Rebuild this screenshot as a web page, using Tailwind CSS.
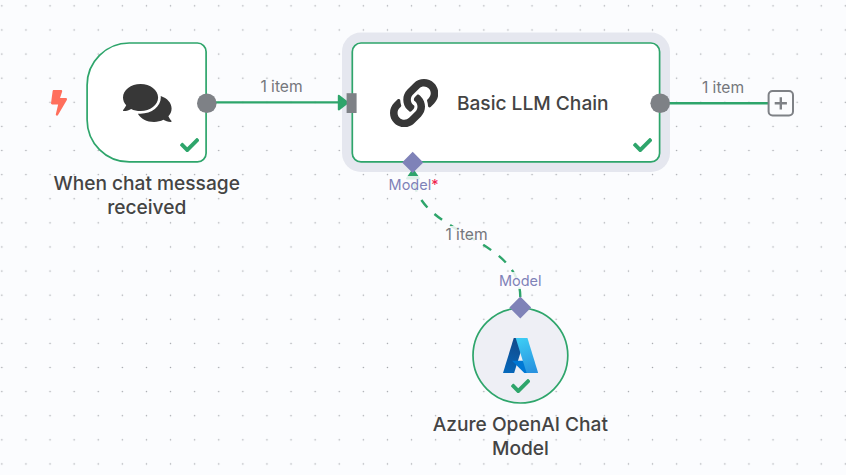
<!DOCTYPE html>
<html lang="en">
<head>
<meta charset="utf-8">
<title>Workflow canvas</title>
<script src="https://cdn.jsdelivr.net/npm/@tailwindcss/browser@4"></script>
</head>
<body class="overflow-hidden font-['Inter',sans-serif]">
<svg class="hidden">
  <symbol id="check" viewBox="0 65 512 382"><path d="M173.898 439.404l-166.4-166.4c-9.997-9.997-9.997-26.206 0-36.204l36.203-36.204c9.997-9.998 26.207-9.998 36.204 0L192 312.69 432.095 72.596c9.997-9.997 26.207-9.997 36.204 0l36.203 36.204c9.997 9.997 9.997 26.206 0 36.204l-294.4 294.401c-9.998 9.997-26.207 9.997-36.204-.001z"/></symbol>
</svg>
<main class="relative h-[475px] w-[846px] overflow-hidden bg-[#fbfcfe]">
  <!-- dotted grid and card outlines -->
  <svg class="absolute inset-0" width="846" height="475">
    <defs><pattern id="dots" x="-10.2" y="-6.2" width="24.1" height="24.11" patternUnits="userSpaceOnUse"><circle cx="12.05" cy="12.05" r="0.75" fill="#a0a2a8"/></pattern></defs>
    <rect width="846" height="475" fill="url(#dots)"/>
    <rect x="342" y="32.6" width="328" height="139.4" rx="19" fill="#e5e7ef"/>
    <g stroke="#2ea56b" stroke-width="1.7">
      <path fill="#fff" d="M129.3 43H197.4A8.7 8.7 0 0 1 206.1 51.7V153.2A8.7 8.7 0 0 1 197.4 161.9H129.3A42.2 42.2 0 0 1 87.1 119.7V85.2A42.2 42.2 0 0 1 129.3 43Z"/>
      <rect x="352.3" y="43" width="307.3" height="118.9" rx="8.7" fill="#fff"/>
      <circle cx="520.4" cy="355.6" r="47.4" fill="#eeeff5"/>
    </g>
  </svg>

  <!-- node cards -->
  <section class="absolute left-[87px] top-[42px] flex h-[121px] w-[120px] items-center justify-center">
    <svg class="ml-[1px] mt-[1px] h-[38px] w-[48.6px] fill-[#373737]" viewBox="0 32 576 448"><path d="M416 192c0-88.4-93.1-160-208-160S0 103.6 0 192c0 34.3 14.1 65.9 38 92-13.4 30.2-35.5 54.2-35.8 54.5-2.2 2.3-2.8 5.7-1.5 8.7S4.8 352 8 352c36.6 0 66.9-12.3 88.7-25 32.2 15.7 70.3 25 111.3 25 114.9 0 208-71.6 208-160zm122 220c23.9-26 38-57.7 38-92 0-66.9-53.5-124.2-129.3-148.1.9 6.6 1.3 13.3 1.3 20.1 0 105.9-107.7 192-240 192-10.8 0-21.3-.8-31.7-1.9C207.8 439.6 281.8 480 368 480c41 0 79.1-9.2 111.3-25 21.8 12.7 52.1 25 88.7 25 3.2 0 6.1-1.9 7.3-4.8 1.3-2.9.7-6.3-1.5-8.7-.3-.3-22.4-24.2-35.8-54.5z"/></svg>
    <svg class="absolute bottom-[11px] right-[8px] h-[14.4px] w-[19.3px] fill-[#2ea56b]"><use href="#check"/></svg>
  </section>

  <section class="absolute left-[352px] top-[42px] flex h-[121px] w-[308px] items-center pl-[38px]">
    <svg class="mt-[1px] h-[48.3px] w-[48.3px] fill-[#373737]" viewBox="0 0 512 512"><path d="M326.612 185.391c59.747 59.809 58.927 155.698.36 214.59-.11.12-.24.25-.36.37l-67.2 67.2c-59.27 59.27-155.699 59.262-214.96 0-59.27-59.26-59.27-155.7 0-214.96l37.106-37.106c9.84-9.84 26.786-3.3 27.294 10.606.648 17.722 3.826 35.527 9.69 52.721 1.986 5.822.567 12.262-3.783 16.612l-13.087 13.087c-28.026 28.026-28.905 73.66-1.155 101.96 28.024 28.579 74.086 28.749 102.325.51l67.2-67.19c28.191-28.191 28.073-73.757 0-101.83-3.701-3.694-7.429-6.564-10.341-8.569a16.037 16.037 0 0 1-6.947-12.606c-.396-10.567 3.348-21.456 11.698-29.806l21.054-21.055c5.521-5.521 14.182-6.199 20.584-1.731a152.482 152.482 0 0 1 20.522 17.197zM467.547 44.449c-59.261-59.262-155.69-59.27-214.96 0l-67.2 67.2c-.12.12-.25.25-.36.37-58.566 58.892-59.387 154.781.36 214.59a152.454 152.454 0 0 0 20.521 17.196c6.402 4.468 15.064 3.789 20.584-1.731l21.054-21.055c8.35-8.35 12.094-19.239 11.698-29.806a16.037 16.037 0 0 0-6.947-12.606c-2.912-2.005-6.64-4.875-10.341-8.569-28.073-28.073-28.191-73.639 0-101.83l67.2-67.19c28.239-28.239 74.3-28.069 102.325.51 27.75 28.3 26.872 73.934-1.155 101.96l-13.087 13.087c-4.35 4.35-5.769 10.79-3.783 16.612 5.864 17.194 9.042 34.999 9.69 52.721.509 13.906 17.454 20.446 27.294 10.606l37.106-37.106c59.271-59.259 59.271-155.699.001-214.959z"/></svg>
    <span class="ml-[18.6px] mt-[2px] whitespace-nowrap text-[19.15px] font-medium text-[#444444]">Basic LLM Chain</span>
    <svg class="absolute bottom-[11px] right-[8px] h-[14.4px] w-[19.3px] fill-[#2ea56b]"><use href="#check"/></svg>
  </section>

  <section class="absolute left-[472px] top-[307px] flex h-[97px] w-[97px] flex-col items-center pt-[31px]">
    <svg class="h-[35px] w-[35.2px]" viewBox="3 6.5 90 83" preserveAspectRatio="none">
      <defs>
        <linearGradient id="a1" gradientUnits="userSpaceOnUse" x1="42" y1="12" x2="15" y2="92"><stop stop-color="#114a8b"/><stop offset="1" stop-color="#0669bc"/></linearGradient>
        <linearGradient id="a2" gradientUnits="userSpaceOnUse" x1="46" y1="10" x2="76" y2="88"><stop stop-color="#3ccbf4"/><stop offset="1" stop-color="#2892df"/></linearGradient>
      </defs>
      <path fill="url(#a1)" d="M30.5 6.5H59.4L31.5 89.5H3Z"/>
      <path fill="#0078d4" d="M26 60.3H71L80 89.5H57.5Z"/>
      <path fill="url(#a2)" d="M35.5 6.5H65.5L93 89.5H63.5Z"/>
    </svg>
    <svg class="mt-[5.8px] h-[14.4px] w-[19.3px] fill-[#2ea56b]"><use href="#check"/></svg>
  </section>

  <!-- trigger bolt -->
  <svg class="absolute left-[51px] top-[90.4px] h-[25.8px] w-[16px] fill-[#ff6f5c]" viewBox="0 0 320 512"><path d="M296 160H180.6l42.6-129.8C227.2 15 215.7 0 200 0H56C44 0 33.8 8.9 32.2 20.8l-32 240C-1.7 275.2 9.5 288 24 288h118.7L96.6 482.5c-3.6 15.2 8 29.5 23.3 29.5 8.4 0 16.4-4.4 20.8-12l176-304c9.3-15.9-2.2-36-20.7-36z"/></svg>

  <!-- connections and ports -->
  <svg class="absolute inset-0" width="846" height="475" fill="none">
    <g stroke="#2ea56b" stroke-width="2.4">
      <path d="M207 102.4H340M660 103.2H768"/>
      <path d="M520.3 297C520.3 235 413 235 413 173" stroke-dasharray="9.6 9.6"/>
    </g>
    <path d="M338.8 95.8L347.5 102.6L338.8 109.4Z" fill="#2ea56b" stroke="#2ea56b" stroke-width="2" stroke-linejoin="round"/>
    <path d="M413 170L419 178.5H407Z" fill="#2ea56b" stroke="#2ea56b" stroke-width="2" stroke-linejoin="round"/>
    <circle cx="206.8" cy="103.2" r="9.8" fill="#7e8186"/>
    <circle cx="660.2" cy="103.2" r="9.8" fill="#7e8186"/>
    <path d="M346.6 93.2H356.6V113H346.6Z" fill="#7e8186"/>
    <path d="M412.7 151.8L423.3 162.4L412.7 173L402.1 162.4ZM520.3 296.6L531.2 307.5L520.3 318.4L509.4 307.5Z" fill="#7f82b8"/>
    <rect x="768.6" y="91" width="24.4" height="24.4" rx="4" fill="#fbfcfe" stroke="#7e8186" stroke-width="2"/>
    <path d="M780.8 97.2V109.4M774.7 103.3H786.9" stroke="#7e8186" stroke-width="2.4"/>
  </svg>

  <!-- labels -->
  <span class="absolute left-[231.5px] top-[77px] w-[100px] text-center text-[15.6px] leading-[20px] text-[#75777c]">1 item</span>
  <span class="absolute left-[673px] top-[78px] w-[100px] text-center text-[15.6px] leading-[20px] text-[#75777c]">1 item</span>
  <span class="absolute left-[444px] top-[226px] w-[45px] bg-[#fbfcfe]/85 text-center text-[15.6px] leading-[18px] text-[#75777c]">1 item</span>
  <span class="absolute left-[388px] top-[176px] w-[51px] whitespace-nowrap bg-[#fbfcfe]/85 text-center text-[14.5px] leading-[17px] text-[#7f82b8]">Model<span class="text-[#f0214c]">*</span></span>
  <span class="absolute left-[498px] top-[272px] w-[44.5px] bg-[#fbfcfe]/85 text-center text-[14.5px] leading-[17px] text-[#7f82b8]">Model</span>
  <h2 class="absolute left-[36.7px] top-[170.5px] w-[220px] text-center text-[19.15px] font-medium leading-[24.1px] text-[#444444]">When chat message<br>received</h2>
  <h2 class="absolute left-[410.4px] top-[411.5px] w-[220px] text-center text-[19.15px] font-medium leading-[24.1px] text-[#444444]">Azure OpenAI Chat<br>Model</h2>
</main>
</body>
</html>
